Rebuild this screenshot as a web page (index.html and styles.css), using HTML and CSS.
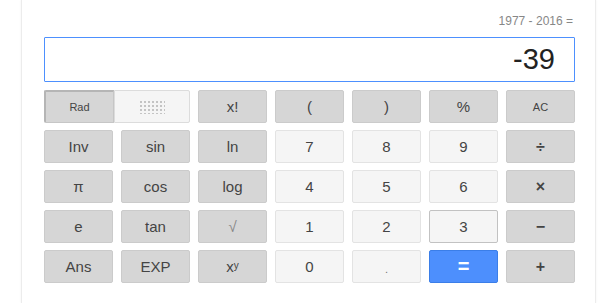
FILE: index.html
```html
<!DOCTYPE html>
<html>
<head>
<meta charset="utf-8">
<link rel="stylesheet" href="styles.css">
</head>
<body>
<div class="card">
  <div class="expr">1977 - 2016 =</div>
  <div class="display">-39</div>
  <div class="keys">
    <div class="toggle">
      <div class="rad">Rad</div>
      <div class="deg"><span class="dots"></span></div>
    </div>
    <div class="key op">x!</div>
    <div class="key op">(</div>
    <div class="key op">)</div>
    <div class="key op">%</div>
    <div class="key op small">AC</div>

    <div class="key op">Inv</div>
    <div class="key op">sin</div>
    <div class="key op">ln</div>
    <div class="key num">7</div>
    <div class="key num">8</div>
    <div class="key num">9</div>
    <div class="key op sym">÷</div>

    <div class="key op">π</div>
    <div class="key op">cos</div>
    <div class="key op">log</div>
    <div class="key num">4</div>
    <div class="key num">5</div>
    <div class="key num">6</div>
    <div class="key op sym">×</div>

    <div class="key op">e</div>
    <div class="key op">tan</div>
    <div class="key op light">√</div>
    <div class="key num">1</div>
    <div class="key num">2</div>
    <div class="key num hover">3</div>
    <div class="key op sym">−</div>

    <div class="key op">Ans</div>
    <div class="key op">EXP</div>
    <div class="key op">x<sup>y</sup></div>
    <div class="key num">0</div>
    <div class="key num dot">.</div>
    <div class="key eq">=</div>
    <div class="key op sym">+</div>
  </div>
</div>
</body>
</html>
```
FILE: styles.css
```css
html, body {
  margin: 0;
  padding: 0;
  background: #fff;
  font-family: "Liberation Sans", Arial, sans-serif;
}
body {
  height: 303px;
  overflow: hidden;
}
.card {
  margin-left: 21px;
  width: 575px;
  height: 303px;
  box-sizing: border-box;
  padding: 13px 20px 0 22px;
  border-left: 1px solid #ececec;
  border-right: 1px solid #ececec;
  box-shadow: 0 0 2px rgba(0,0,0,0.06);
}
.expr {
  text-align: right;
  font-size: 12px;
  line-height: 16px;
  color: #878787;
  padding-right: 2px;
  height: 24px;
}
.display {
  height: 45px;
  box-sizing: border-box;
  border: 1px solid #4d90fe;
  border-radius: 1px;
  text-align: right;
  font-size: 29px;
  line-height: 43px;
  padding-right: 19px;
  color: #222;
}
.keys {
  margin-top: 8px;
  display: grid;
  grid-template-columns: repeat(7, 69px);
  grid-auto-rows: 33px;
  column-gap: 8px;
  row-gap: 7px;
}
.toggle {
  grid-column: span 2;
  display: flex;
}
.rad {
  width: 70px;
  box-sizing: border-box;
  background: #d6d6d6;
  border: 1px solid #c6c6c6;
  border-left: 2px solid #b5b5b5;
  border-top: 2px solid #b5b5b5;
  display: flex;
  align-items: center;
  justify-content: center;
  font-size: 11px;
  color: #444;
  border-radius: 2px 0 0 2px;
}
.deg {
  flex: 1;
  box-sizing: border-box;
  background: #f5f5f5;
  border: 1px solid #dcdcdc;
  border-radius: 0 2px 2px 0;
  display: flex;
  align-items: center;
  justify-content: center;
}
.dots {
  width: 26px;
  height: 14px;
  background-image: radial-gradient(circle, #c4c4c4 0.8px, transparent 1.1px);
  background-size: 4px 4px;
  background-position: 0 0;
}
.key {
  box-sizing: border-box;
  border-radius: 2px;
  display: flex;
  align-items: center;
  justify-content: center;
  font-size: 15px;
  color: #444;
}
.op {
  background: #d6d6d6;
  border: 1px solid #cbcbcb;
}
.num {
  background: #f5f5f5;
  border: 1px solid #e3e3e3;
}
.num.hover {
  border-color: #c2c2c2;
}
.dot {
  font-size: 11px;
  color: #777;
  padding-top: 4px;
}
.small {
  font-size: 11px;
}
.sym {
  font-weight: bold;
  font-size: 16px;
}
.light {
  color: #888;
}
.eq {
  background: #4d8ffd;
  border: 1px solid #3b7ee8;
  color: #fff;
  font-weight: bold;
  font-size: 20px;
}
sup {
  font-size: 10px;
  line-height: 0;
  position: relative;
  top: -1px;
}
```
